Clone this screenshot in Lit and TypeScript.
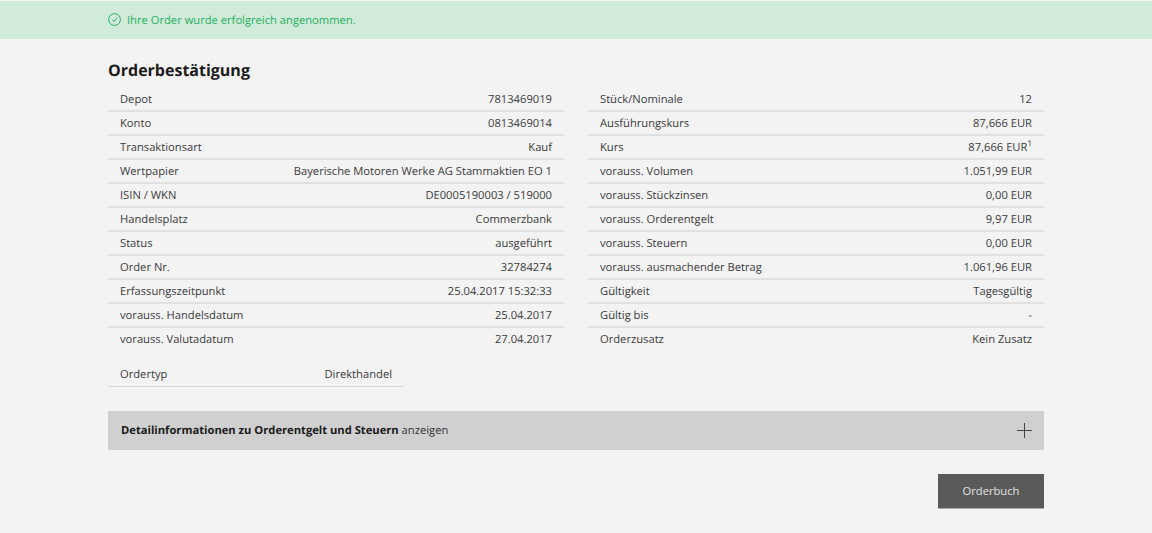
import { LitElement, html, css } from "lit";
import { customElement } from "lit/decorators.js";

const left: [string, string][] = [
  ["Depot", "7813469019"],
  ["Konto", "0813469014"],
  ["Transaktionsart", "Kauf"],
  ["Wertpapier", "Bayerische Motoren Werke AG Stammaktien EO 1"],
  ["ISIN / WKN", "DE0005190003 / 519000"],
  ["Handelsplatz", "Commerzbank"],
  ["Status", "ausgeführt"],
  ["Order Nr.", "32784274"],
  ["Erfassungszeitpunkt", "25.04.2017 15:32:33"],
  ["vorauss. Handelsdatum", "25.04.2017"],
  ["vorauss. Valutadatum", "27.04.2017"],
];
const right: [string, string][] = [
  ["Stück/Nominale", "12"],
  ["Ausführungskurs", "87,666 EUR"],
  ["Kurs", "87,666 EUR"],
  ["vorauss. Volumen", "1.051,99 EUR"],
  ["vorauss. Stückzinsen", "0,00 EUR"],
  ["vorauss. Orderentgelt", "9,97 EUR"],
  ["vorauss. Steuern", "0,00 EUR"],
  ["vorauss. ausmachender Betrag", "1.061,96 EUR"],
  ["Gültigkeit", "Tagesgültig"],
  ["Gültig bis", "-"],
  ["Orderzusatz", "Kein Zusatz"],
];

@customElement("app-root")
export class AppRoot extends LitElement {
  static styles = css`
    :host {
      display: block;
      height: 533px;
      overflow: hidden;
      background: #f3f3f3;
      font-family: "Open Sans", sans-serif;
      font-size: 11.2px;
      color: #3c3c3c;
      text-rendering: geometricPrecision;
    }
    .alert {
      height: 38px;
      margin-top: 1px;
      box-sizing: border-box;
      padding: 0 0 0 108px;
      background: #d1ebdb;
      display: flex;
      align-items: center;
      gap: 6px;
      color: #27ae60;
    }
    .alert svg { display: block; margin-top: -1px; }
    main { width: 936px; margin-left: 108px; }
    h1 {
      margin: 0;
      padding-top: 21px;
      height: 27px;
      line-height: 20px;
      font-size: 16px;
      font-weight: 700;
      color: #1a1a1a;
    }
    .cols { display: flex; gap: 24px; margin-top: 1px; }
    .col { width: 456px; }
    .row {
      height: 24px;
      box-sizing: border-box;
      display: flex;
      justify-content: space-between;
      align-items: center;
      padding: 0 12px;
      border-bottom: 2px solid #e1e1e1;
    }
    .row.last { border-bottom-color: transparent; }
    sup { font-size: 8px; line-height: 0; vertical-align: super; }
    .type {
      width: 296px;
      margin-top: 11px;
      height: 24px;
      box-sizing: border-box;
      border-bottom: 1px solid #d8d8d8;
      display: flex;
      justify-content: space-between;
      align-items: center;
      padding: 0 12px;
    }
    .details {
      margin-top: 24px;
      height: 39px;
      box-sizing: border-box;
      background: #d0d0d0;
      display: flex;
      justify-content: space-between;
      align-items: center;
      padding: 0 12px 0 13px;
      color: #333;
    }
    .details b { color: #1a1a1a; }
    .details svg { display: block; }
    .actions { display: flex; justify-content: flex-end; margin-top: 24px; }
    .btn {
      width: 106px;
      height: 35px;
      box-sizing: border-box;
      border: none;
      border-bottom: 1px solid #aaa;
      background: #5a5a5a;
      color: #e4e4e4;
      font: inherit;
      padding: 0 0 1px;
    }
  `;

  private row(r: [string, string], last: boolean) {
    return html`<div class="row ${last ? "last" : ""}">
      <span>${r[0]}</span>
      <span>${r[1]}${r[0] === "Kurs" ? html`<sup>1</sup>` : ""}</span>
    </div>`;
  }

  render() {
    return html`
      <div class="alert">
        <svg width="13" height="13" viewBox="0 0 13 13" fill="none" stroke="#27ae60" stroke-width="1">
          <circle cx="6.5" cy="6.5" r="5.9"></circle>
          <path d="M4 6.7 L5.9 8.6 L9.2 4.6"></path>
        </svg>
        <span>Ihre Order wurde erfolgreich angenommen.</span>
      </div>
      <main>
        <h1>Orderbestätigung</h1>
        <div class="cols">
          <div class="col">${left.map((r, i) => this.row(r, i === left.length - 1))}</div>
          <div class="col">${right.map((r, i) => this.row(r, i === right.length - 1))}</div>
        </div>
        <div class="type"><span>Ordertyp</span><span>Direkthandel</span></div>
        <div class="details">
          <span><b>Detailinformationen zu Orderentgelt und Steuern</b> anzeigen</span>
          <svg width="15" height="15" viewBox="0 0 15 15" stroke="#444" stroke-width="1">
            <path d="M0 7.5 H15 M7.5 0 V15"></path>
          </svg>
        </div>
        <div class="actions"><button class="btn">Orderbuch</button></div>
      </main>
    `;
  }
}
